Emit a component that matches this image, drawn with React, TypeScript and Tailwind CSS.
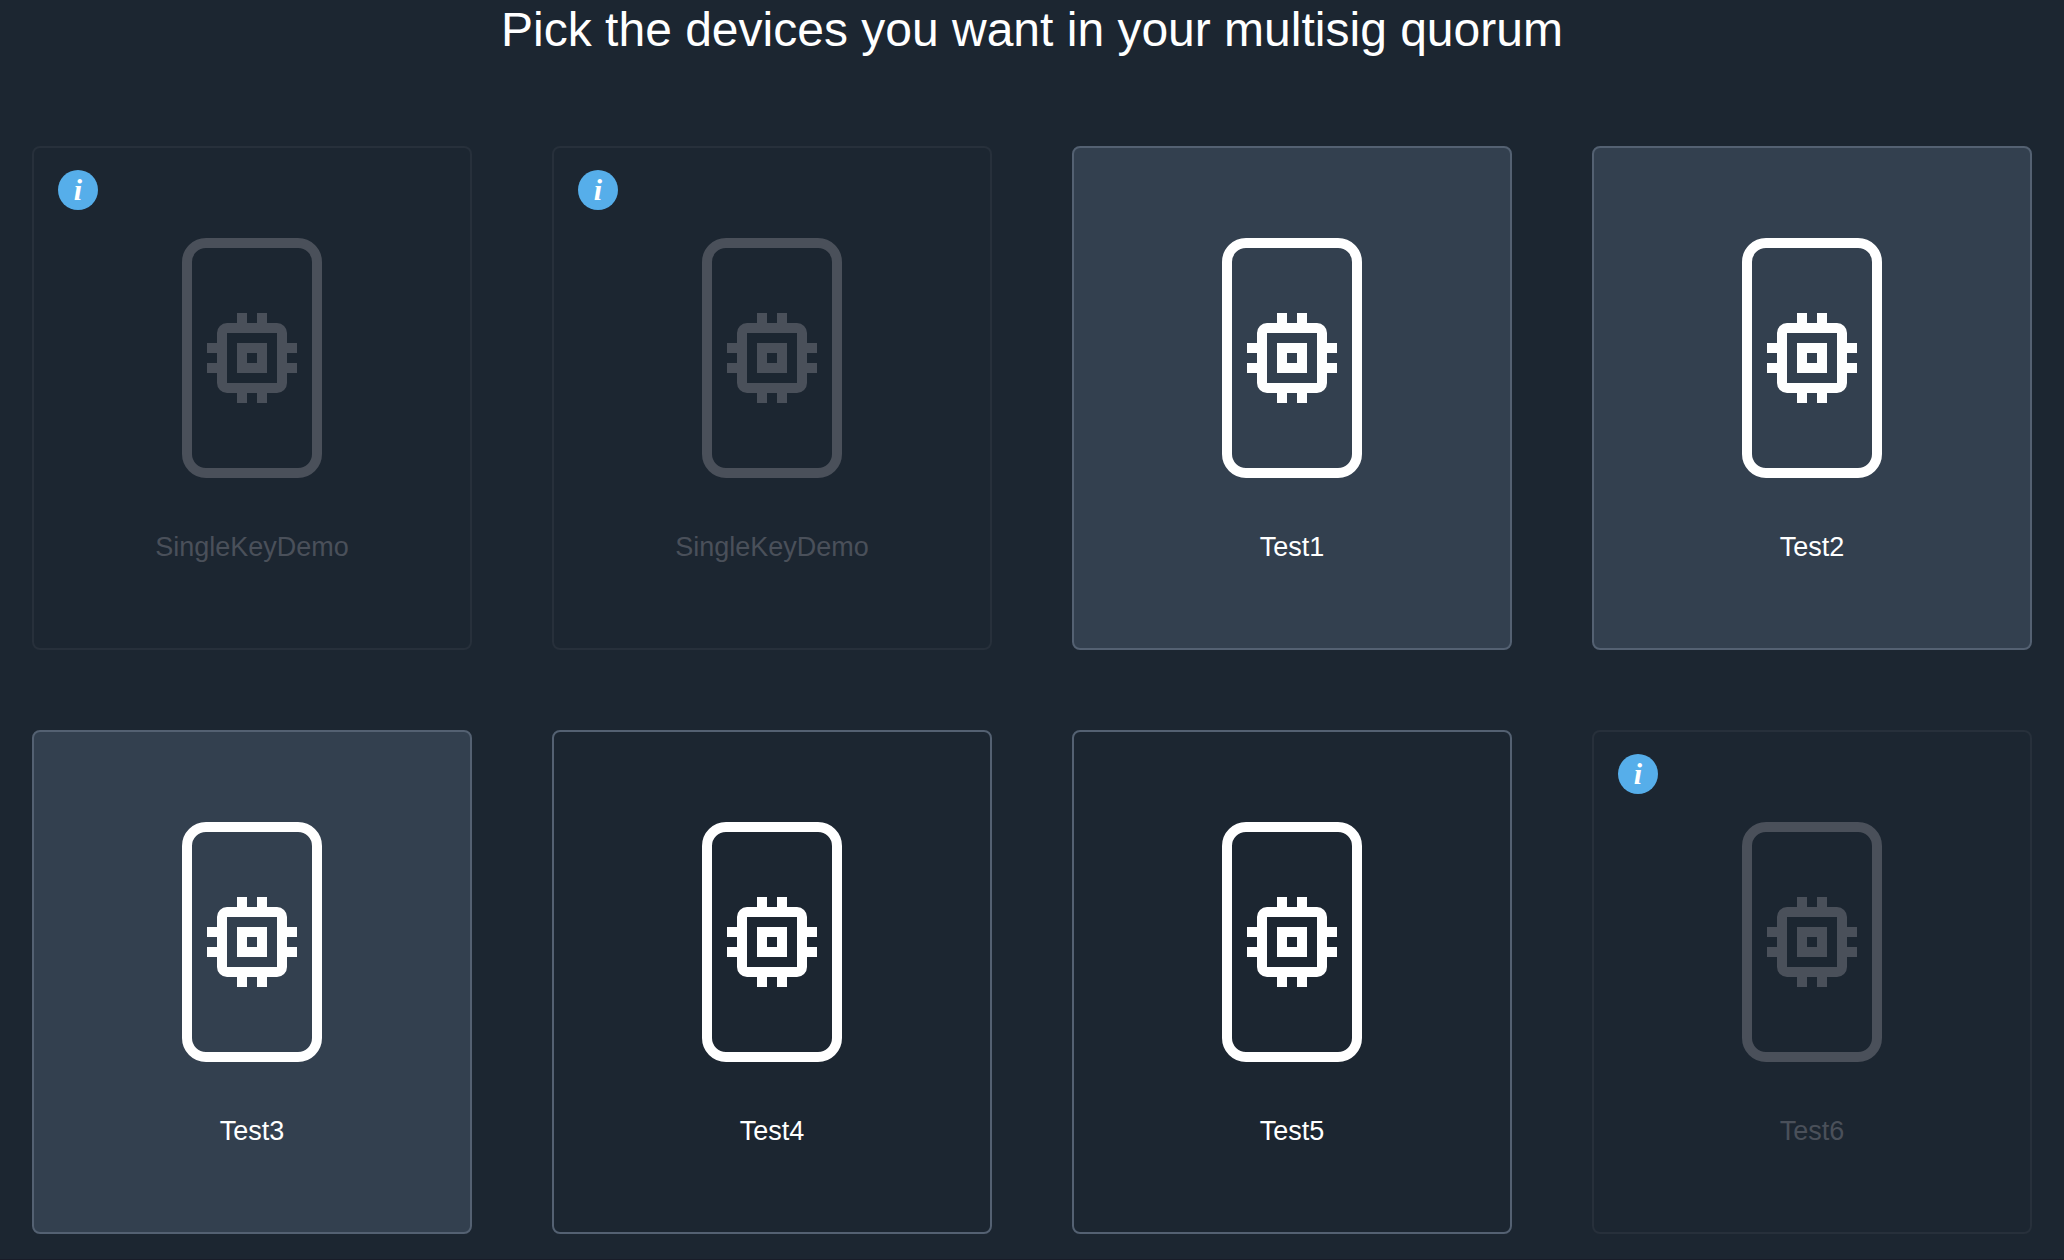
import React, { useState } from "react";

type Device = { id: number; name: string; disabled?: boolean };

const devices: Device[] = [
  { id: 1, name: "SingleKeyDemo", disabled: true },
  { id: 2, name: "SingleKeyDemo", disabled: true },
  { id: 3, name: "Test1" },
  { id: 4, name: "Test2" },
  { id: 5, name: "Test3" },
  { id: 6, name: "Test4" },
  { id: 7, name: "Test5" },
  { id: 8, name: "Test6", disabled: true },
];

function DeviceIcon() {
  return (
    <svg viewBox="0 0 140 240" className="h-60 w-35" fill="none" aria-hidden="true">
      <rect x="5" y="5" width="130" height="230" rx="19" stroke="currentColor" strokeWidth="10" />
      <path
        fill="currentColor"
        fillRule="evenodd"
        d="M55 75h10v10h10v-10h10v10h10a10 10 0 0 1 10 10v10h10v10h-10v10h10v10h-10v10a10 10 0 0 1 -10 10h-10v10h-10v-10h-10v10h-10v-10h-10a10 10 0 0 1 -10 -10v-10h-10v-10h10v-10h-10v-10h10v-10a10 10 0 0 1 10 -10h10zM45 95v50h50v-50zM55 105h30v30h-30zM65 115v10h10v-10z"
      />
    </svg>
  );
}

function InfoBadge() {
  return (
    <span className="absolute top-[22px] left-6 flex size-10 items-center justify-center rounded-full bg-[#56aeea] font-['Liberation_Serif',serif] text-[30px] leading-10 font-bold text-white italic">
      i
    </span>
  );
}

function DeviceCard({
  device,
  selected,
  onToggle,
}: {
  device: Device;
  selected: boolean;
  onToggle: () => void;
}) {
  const tone = device.disabled
    ? "border-[#27303b] text-[#4a505a]"
    : selected
      ? "border-[#546172] bg-[#33404f] text-white"
      : "border-[#546172] text-white";
  return (
    <button
      type="button"
      disabled={device.disabled}
      aria-pressed={selected}
      onClick={onToggle}
      className={`relative flex flex-col items-center gap-12 rounded-lg border-2 px-4 pt-[90px] pb-20 ${tone}`}
    >
      {device.disabled && <InfoBadge />}
      <DeviceIcon />
      <span className="text-[27px] leading-[42px]">{device.name}</span>
    </button>
  );
}

export default function App() {
  const [selected, setSelected] = useState<number[]>([3, 4, 5]);
  const toggle = (id: number) =>
    setSelected((ids) => (ids.includes(id) ? ids.filter((i) => i !== id) : [...ids, id]));

  return (
    <main className="min-h-screen border-b border-[#191c28] bg-[#1c2631] px-8 pb-6 font-['Liberation_Sans',Arial,sans-serif] text-white">
      <h1 className="text-center text-[48px] leading-[60px]">
        Pick the devices you want in your multisig quorum
      </h1>
      <div className="mt-[86px] grid grid-cols-4 gap-20">
        {devices.map((device) => (
          <DeviceCard
            key={device.id}
            device={device}
            selected={selected.includes(device.id)}
            onToggle={() => toggle(device.id)}
          />
        ))}
      </div>
    </main>
  );
}
